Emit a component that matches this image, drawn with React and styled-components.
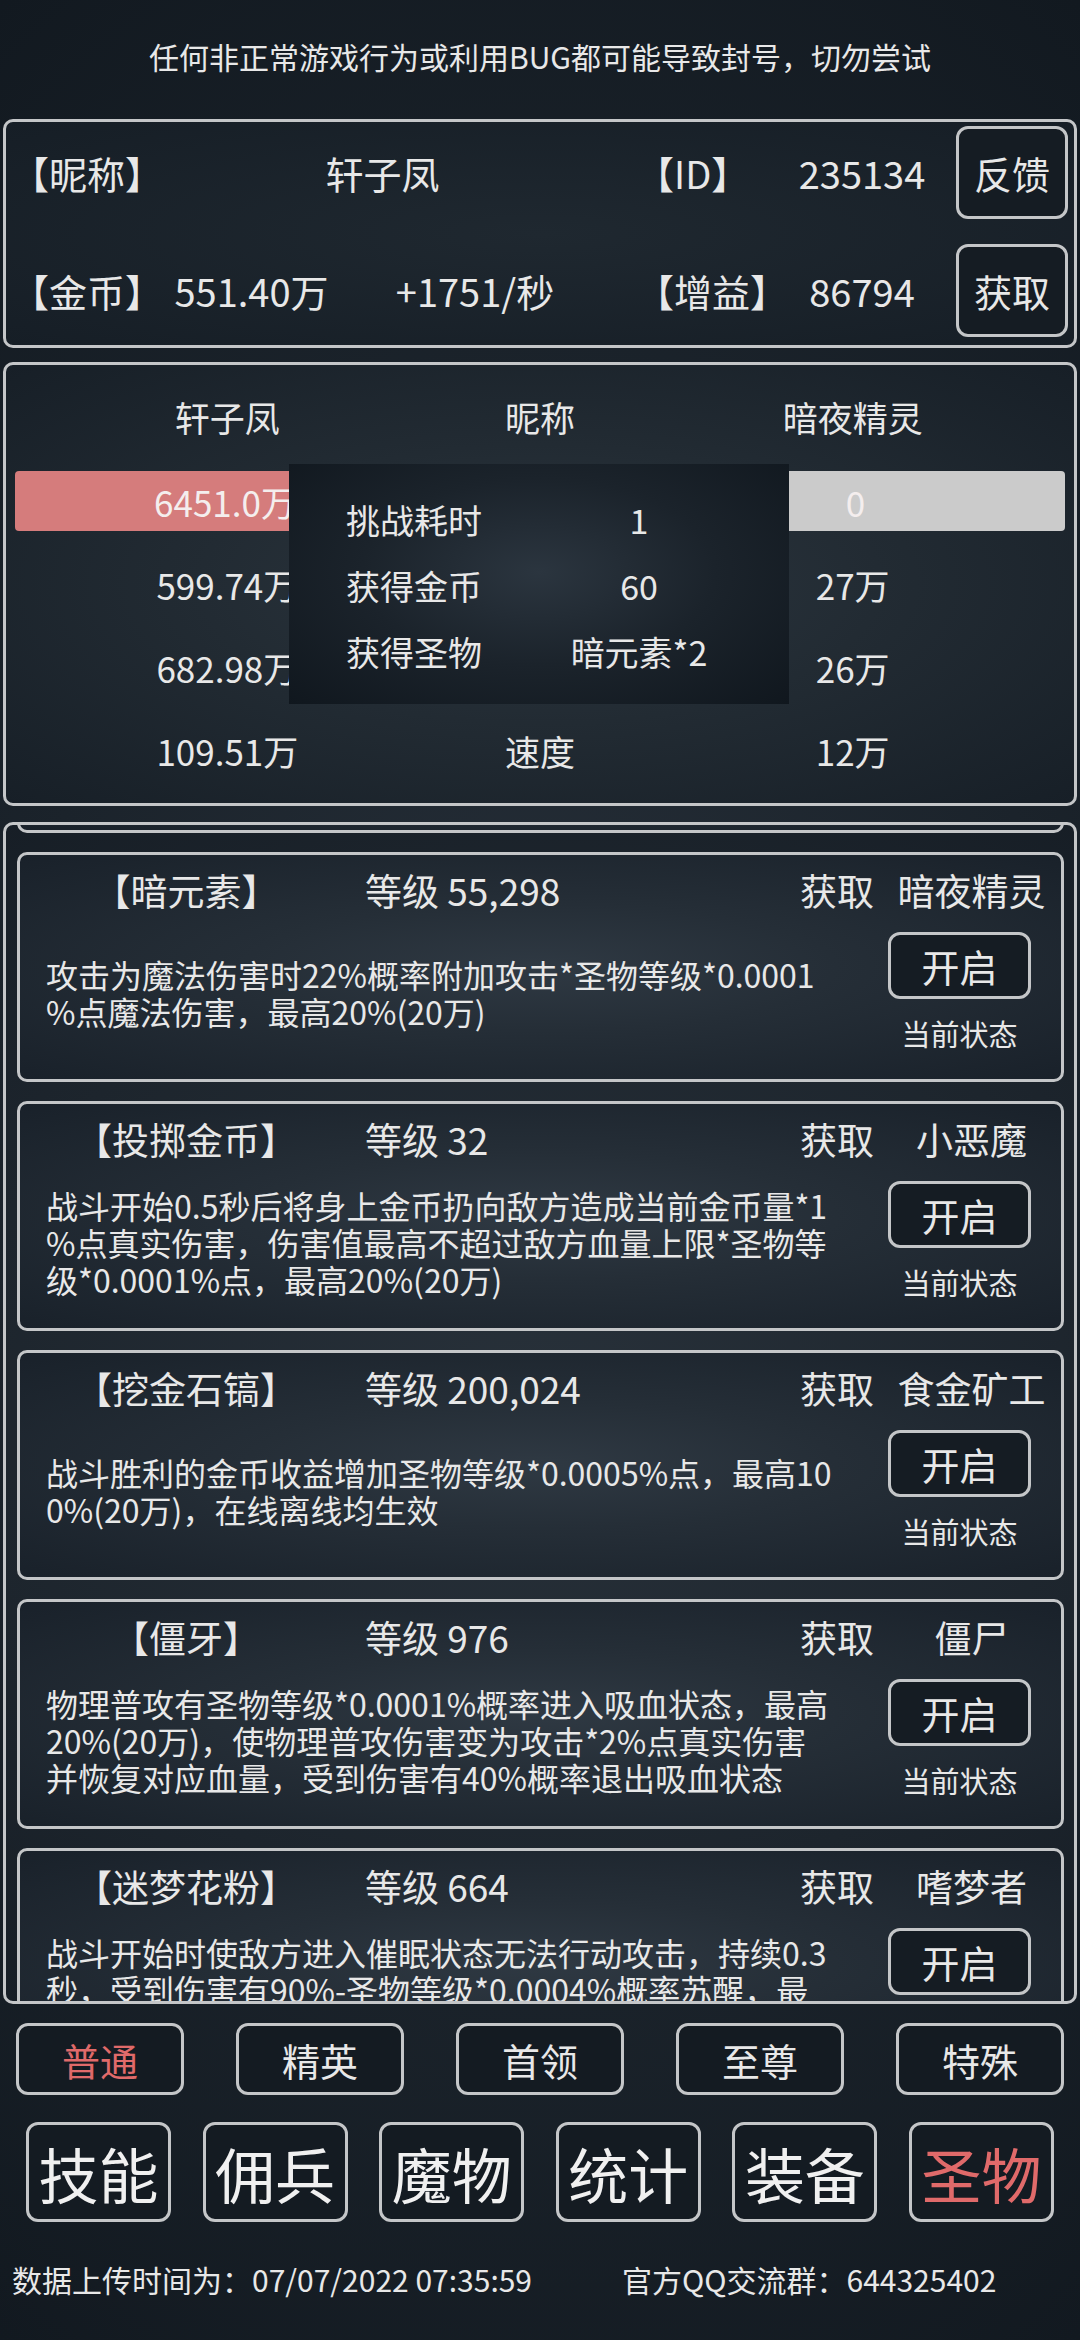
import React from 'react';
import styled, { createGlobalStyle } from 'styled-components';

const GlobalStyle = createGlobalStyle`
    html, body {
        margin: 0;
        padding: 0;
        background: #151d25;
    }
    body {
        font-family: "Noto Sans CJK SC", "Noto Sans", sans-serif;
        color: #e8e8e8;
    }
    * {
        box-sizing: border-box;
    }
`;

const LINE = '#c4c6c8';
const RED = '#e06a6a';

const Screen = styled.div`
    width: 1080px;
    height: 2340px;
    overflow: hidden;
    display: flex;
    flex-direction: column;
    background: radial-gradient(ellipse 90% 60% at 50% 50%, #27303a 0%, #1b232b 55%, #121920 100%);
`;

const Warning = styled.div`
    height: 119px;
    display: flex;
    align-items: center;
    justify-content: center;
    font-size: 30px;
    padding-bottom: 8px;
`;

const Panel = styled.div`
    margin: 0 3px;
    border: 3px solid ${LINE};
    border-radius: 10px;
    background: radial-gradient(ellipse at 50% 50%, #2c363f 0%, #222b33 45%, #171f27 100%);
`;

const InfoBox = styled(Panel)`
    height: 229px;
    display: grid;
    grid-template-columns: 148px 185px 262px 186px 140px 112px;
    grid-template-rows: 93px 93px;
    row-gap: 25px;
    padding: 4px 6px 8px 5px;
    background: radial-gradient(ellipse at 50% 50%, #1f2830 0%, #161e26 100%);
    font-size: 38px;
`;

const Cell = styled.div`
    display: flex;
    align-items: center;
    justify-content: ${({ $align }) => $align || 'center'};
    padding-left: ${({ $pad }) => $pad || 0}px;
    grid-column: ${({ $span }) => $span || 'auto'};
    white-space: nowrap;
`;

const SmallButton = styled.div`
    margin-left: 24px;
    width: 112px;
    display: flex;
    align-items: center;
    justify-content: center;
    border: 3px solid ${LINE};
    border-radius: 12px;
    font-size: 38px;
    background: #151c23;
`;

const BattlePanel = styled(Panel)`
    position: relative;
    margin-top: 14px;
    height: 444px;
    padding-top: 11px;
    font-size: 35px;
`;

const StatRow = styled.div`
    display: grid;
    grid-template-columns: 1fr 1fr 1fr;
    padding: 0 65px;
    height: ${({ $h }) => $h}px;
    align-items: center;
    justify-items: center;
    white-space: nowrap;
`;

const BarRow = styled.div`
    display: grid;
    grid-template-columns: 1fr 1fr;
    margin: 15px 9px 12px;
    height: 60px;
`;

const Bar = styled.div`
    display: flex;
    align-items: center;
    justify-content: center;
    border-radius: 4px;
    font-size: 35px;
    color: #f4eeee;
    white-space: nowrap;
    background: ${({ $color }) => $color};
    padding-right: ${({ $side }) => ($side === 'left' ? 105 : 0)}px;
    padding-left: ${({ $side }) => ($side === 'right' ? 106 : 0)}px;
`;

const ResultPopup = styled.div`
    position: absolute;
    left: 283px;
    top: 99px;
    width: 500px;
    height: 240px;
    padding-top: 22px;
    background: radial-gradient(ellipse at 50% 45%, #2b353f 0%, #1b232b 50%, #10171e 100%);
    display: grid;
    grid-template-columns: 250px 200px;
    grid-auto-rows: 66px;
    align-items: center;
    justify-items: center;
    font-size: 34px;
`;

const ListFrame = styled(Panel)`
    margin-top: 16px;
    height: 1182px;
    overflow: hidden;
    background: radial-gradient(ellipse 90% 70% at 50% 50%, #28313a 0%, #1d252d 60%, #151c24 100%);
`;

const List = styled.div`
    margin-top: -222px;
    padding: 0 10px 0 11px;
    display: flex;
    flex-direction: column;
    gap: 19px;
`;

const Card = styled.div`
    height: 230px;
    flex-shrink: 0;
    border: 3px solid ${LINE};
    border-radius: 10px;
    background: radial-gradient(ellipse at 50% 50%, #2f3943 0%, #252e37 40%, #19212a 100%);
    display: flex;
    flex-direction: column;
`;

const CardHead = styled.div`
    height: 74px;
    padding-bottom: 5px;
    display: grid;
    grid-template-columns: 332px 440px 90px 179px;
    align-items: center;
    font-size: 37px;
    white-space: nowrap;
`;

const HeadCell = styled.div`
    display: flex;
    justify-content: ${({ $align }) => $align || 'center'};
    padding-left: ${({ $pad }) => $pad || 0}px;
`;

const CardBody = styled.div`
    flex: 1;
    display: flex;
    justify-content: space-between;
    padding: 0 30px 0 26px;
`;

const Description = styled.div`
    align-self: center;
    margin-bottom: 22px;
    font-size: 32px;
    line-height: 37px;
`;

const DescLine = styled.div`
    white-space: nowrap;
`;

const StateColumn = styled.div`
    width: 143px;
    padding-top: 3px;
    display: flex;
    flex-direction: column;
    align-items: center;
`;

const ToggleButton = styled.div`
    width: 143px;
    height: 67px;
    display: flex;
    align-items: center;
    justify-content: center;
    border: 3px solid ${LINE};
    border-radius: 12px;
    font-size: 38px;
    background: #151c23;
`;

const StateLabel = styled.div`
    margin-top: 14px;
    font-size: 29px;
    line-height: 40px;
`;

const FilterRow = styled.div`
    margin-top: 19px;
    height: 72px;
    padding: 0 16px;
    display: flex;
    justify-content: space-between;
`;

const FilterButton = styled.div`
    width: 168px;
    display: flex;
    align-items: center;
    justify-content: center;
    border: 3px solid ${LINE};
    border-radius: 12px;
    font-size: 38px;
    background: #141b22;
    color: ${({ $active }) => ($active ? RED : '#e8e8e8')};
`;

const NavRow = styled.div`
    margin-top: 27px;
    height: 100px;
    padding: 0 26px;
    display: flex;
    justify-content: space-between;
`;

const NavButton = styled.div`
    width: 145px;
    display: flex;
    align-items: center;
    justify-content: center;
    border: 3px solid ${LINE};
    border-radius: 12px;
    font-size: 60px;
    background: #141b22;
    color: ${({ $active }) => ($active ? RED : '#f0f0f0')};
`;

const Footer = styled.div`
    margin-top: 37px;
    height: 40px;
    display: flex;
    align-items: center;
    padding-left: 12px;
    font-size: 30px;
    white-space: nowrap;
`;

const FooterPart = styled.span`
    width: ${({ $w }) => ($w ? `${$w}px` : 'auto')};
`;

const relics = [
    {
        name: '【暗元素】',
        level: '55,298',
        source: '暗夜精灵',
        lines: ['攻击为魔法伤害时22%概率附加攻击*圣物等级*0.0001', '%点魔法伤害，最高20%(20万)'],
    },
    {
        name: '【投掷金币】',
        level: '32',
        source: '小恶魔',
        lines: [
            '战斗开始0.5秒后将身上金币扔向敌方造成当前金币量*1',
            '%点真实伤害，伤害值最高不超过敌方血量上限*圣物等',
            '级*0.0001%点，最高20%(20万)',
        ],
    },
    {
        name: '【挖金石镐】',
        level: '200,024',
        source: '食金矿工',
        lines: ['战斗胜利的金币收益增加圣物等级*0.0005%点，最高10', '0%(20万)，在线离线均生效'],
    },
    {
        name: '【僵牙】',
        level: '976',
        source: '僵尸',
        lines: [
            '物理普攻有圣物等级*0.0001%概率进入吸血状态，最高',
            '20%(20万)，使物理普攻伤害变为攻击*2%点真实伤害',
            '并恢复对应血量，受到伤害有40%概率退出吸血状态',
        ],
    },
    {
        name: '【迷梦花粉】',
        level: '664',
        source: '嗜梦者',
        lines: [
            '战斗开始时使敌方进入催眠状态无法行动攻击，持续0.3',
            '秒，受到伤害有90%-圣物等级*0.0004%概率苏醒，最',
            '高20%(20万)',
        ],
    },
];

const stats = [
    ['599.74万', '', '27万'],
    ['682.98万', '', '26万'],
    ['109.51万', '速度', '12万'],
];

const filters = ['普通', '精英', '首领', '至尊', '特殊'];
const tabs = ['技能', '佣兵', '魔物', '统计', '装备', '圣物'];

const RelicCard = ({ relic }) => (
    <Card>
        <CardHead>
            <HeadCell>{relic.name}</HeadCell>
            <HeadCell $align='flex-start' $pad={13}>等级 {relic.level}</HeadCell>
            <HeadCell>获取</HeadCell>
            <HeadCell>{relic.source}</HeadCell>
        </CardHead>
        <CardBody>
            <Description>
                {relic.lines.map((line) => (
                    <DescLine key={line}>{line}</DescLine>
                ))}
            </Description>
            <StateColumn>
                <ToggleButton>开启</ToggleButton>
                <StateLabel>当前状态</StateLabel>
            </StateColumn>
        </CardBody>
    </Card>
);

const App = () => (
    <Screen>
        <GlobalStyle />
        <Warning>任何非正常游戏行为或利用BUG都可能导致封号，切勿尝试</Warning>

        <InfoBox>
            <Cell $align='flex-start'>【昵称】</Cell>
            <Cell $span='2 / 4'>轩子凤</Cell>
            <Cell $align='flex-start' $pad={30}>【ID】</Cell>
            <Cell>235134</Cell>
            <SmallButton>反馈</SmallButton>

            <Cell $align='flex-start'>【金币】</Cell>
            <Cell>551.40万</Cell>
            <Cell>+1751/秒</Cell>
            <Cell $align='flex-start' $pad={30}>【增益】</Cell>
            <Cell>86794</Cell>
            <SmallButton>获取</SmallButton>
        </InfoBox>

        <BattlePanel>
            <StatRow $h={80}>
                <span>轩子凤</span>
                <span>昵称</span>
                <span>暗夜精灵</span>
            </StatRow>
            <BarRow>
                <Bar $side='left' $color='#d57c7c'>6451.0万</Bar>
                <Bar $side='right' $color='#cbcbcb'>0</Bar>
            </BarRow>
            {stats.map((row) => (
                <StatRow key={row[0]} $h={83}>
                    {row.map((value, i) => (
                        <span key={i}>{value}</span>
                    ))}
                </StatRow>
            ))}
            <ResultPopup>
                <span>挑战耗时</span>
                <span>1</span>
                <span>获得金币</span>
                <span>60</span>
                <span>获得圣物</span>
                <span>暗元素*2</span>
            </ResultPopup>
        </BattlePanel>

        <ListFrame>
            <List>
                <Card />
                {relics.map((relic) => (
                    <RelicCard key={relic.name} relic={relic} />
                ))}
            </List>
        </ListFrame>

        <FilterRow>
            {filters.map((label, i) => (
                <FilterButton key={label} $active={i === 0}>{label}</FilterButton>
            ))}
        </FilterRow>

        <NavRow>
            {tabs.map((label, i) => (
                <NavButton key={label} $active={i === tabs.length - 1}>{label}</NavButton>
            ))}
        </NavRow>

        <Footer>
            <FooterPart $w={610}>数据上传时间为：07/07/2022 07:35:59</FooterPart>
            <FooterPart>官方QQ交流群：644325402</FooterPart>
        </Footer>
    </Screen>
);

export default App;
